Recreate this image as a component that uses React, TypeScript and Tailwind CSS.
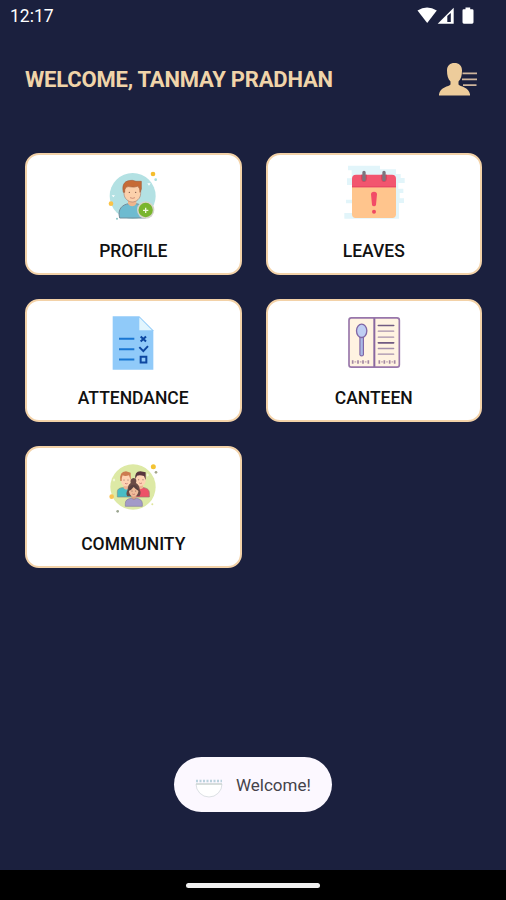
import React from 'react';

function ProfileIcon() {
  return (
    <svg viewBox="-15 0 228 210" className="w-[76px] h-[70px]">
      <circle cx="98" cy="108" r="69" fill="#b3e1e3" />
      <path d="M59 174C52 148 66 134 86 131h22c20 3 34 17 29 43z" fill="#6ebbd0" stroke="#738d9b" strokeWidth="3" />
      <path d="M84 114h25v17c-6 10-19 10-25 0z" fill="#efb58c" />
      <path d="M72 86c0-18 8-21 25-21s25 3 25 21v14c0 16-13 26-25 26s-25-10-25-26z" fill="#fbd0ab" stroke="#a98274" strokeWidth="2" />
      <path d="M70 97c-5-25 4-36 27-36 4 0 7 3 11 3h16v23l-4 10c0-11-3-15-7-18-14 6-27-2-33 2-6 4-6 9-6 16z" fill="#c66b36" stroke="#a16040" strokeWidth="2" />
      <circle cx="88" cy="97" r="2" fill="#765145" />
      <circle cx="107" cy="97" r="2" fill="#765145" />
      <path d="M90 113q8 4 15 0" fill="none" stroke="#b96f5f" strokeWidth="2" />
      <circle cx="137" cy="150" r="26" fill="#d5d4cb" />
      <circle cx="137" cy="150" r="21.5" fill="#79b52d" />
      <path d="M129 151h16M137 143v16" stroke="#eff8dc" strokeWidth="4" />
      <circle cx="159" cy="42" r="7" fill="#f5bd2d" />
      <circle cx="33" cy="131" r="7" fill="#fbc346" />
      <circle cx="167" cy="59" r="4" fill="#a7dddd" />
      <circle cx="51" cy="176" r="3" fill="#8bc5c6" />
      <path d="M35 106l5 6 5-6M142 70l5 7 5-7" fill="#fff" />
    </svg>
  );
}

function LeavesIcon() {
  return (
    <svg viewBox="0 0 228 210" className="w-[76px] h-[70px]">
      <path
        d="M36 17h96v11h48v14h14v12h12v15h-19v17h15v13h-11v16h13v14h-15v47H25v-17h23v-29H30v-11h18V75H33V55h14V31H36z"
        fill="#e2f5fa"
      />
      <path d="M48 75h132v88q0 11-11 11H59q-11 0-11-11z" fill="#ffc58d" />
      <path d="M60 44h108q12 0 12 12v26H48V56q0-12 12-12z" fill="#f2556f" />
      <path d="M48 79h132v3H48z" fill="#e64465" />
      <path d="M75 44h18v11q-1 11-9 11t-9-11zM135 44h18v11q-1 11-9 11t-9-11z" fill="#da455d" />
      <path d="M84 37v22M144 37v22" stroke="#7c747e" strokeWidth="10" strokeLinecap="round" />
      <path d="M105 103q0-8 9-8t9 8l-3 31q-1 5-6 5t-6-5z" fill="#f24c67" />
      <circle cx="114" cy="155" r="6" fill="#ef4963" />
    </svg>
  );
}

function AttendanceIcon() {
  return (
    <svg viewBox="-15 -4.5 228 210" className="w-[76px] h-[70px]">
      <path d="M38 23h80l42 42v119H38z" fill="#90caf9" />
      <path d="M118 27v38h38z" fill="#e1f5fe" />
      <path d="M57 91h46M57 122h46M57 153h46" stroke="#1976d2" strokeWidth="6" />
      <path d="M122 84l16 15M138 84l-16 15" stroke="#0d47a1" strokeWidth="6" />
      <path d="M118 116l12 12 14-15" fill="none" stroke="#0d47a1" strokeWidth="6" />
      <path d="M122 145h17v17h-17z" fill="none" stroke="#0d47a1" strokeWidth="6" />
    </svg>
  );
}

function CanteenIcon() {
  return (
    <svg viewBox="-12 -4.5 228 210" className="w-[76px] h-[70px]">
      <rect x="27" y="28" width="151" height="148" rx="7" fill="#fff3e1" stroke="#9876aa" strokeWidth="5" />
      <path d="M103 29v146" stroke="#8968a0" strokeWidth="6" />
      <path d="M115 51h46M115 103h46" stroke="#715b82" strokeWidth="5" strokeLinecap="round" />
      <path d="M115 68h46M115 86h46M115 120h46M115 137h46" stroke="#a590ac" strokeWidth="4" strokeLinecap="round" />
      <path d="M65 84v53" stroke="#8067a6" strokeWidth="14" strokeLinecap="round" />
      <path d="M65 84v53" stroke="#a9b9e6" strokeWidth="7" strokeLinecap="round" />
      <ellipse cx="65" cy="67" rx="15.5" ry="20" fill="#bfcef3" stroke="#8067a6" strokeWidth="4" />
      <path
        d="M38 155v11M54 155v11M69 155v11M85 155v11M118 155v11M133 155v11M149 155v11M164 155v11"
        stroke="#a287a2"
        strokeWidth="5"
      />
      <path d="M46 158v4M62 158v4M77 158v4M126 158v4M141 158v4M157 158v4" stroke="#c0a4b4" strokeWidth="5" />
    </svg>
  );
}

function CommunityIcon() {
  return (
    <svg viewBox="-15 -9 228 210" className="w-[76px] h-[70px]">
      <circle cx="99" cy="93" r="68" fill="#dde9a5" />
      <path d="M52 123V107q0-10 14-12h21l9 28z" fill="#48bdc5" stroke="#828f88" strokeWidth="2" />
      <path d="M104 123l8-28h20q16 3 16 15v13z" fill="#ed5268" stroke="#9a746c" strokeWidth="2" />
      <path d="M71 84h15v13q-7 8-15 0zM115 82h14v14q-7 7-14 0z" fill="#eeb495" />
      <path d="M63 65q0-14 14-14t16 14v9q-1 17-15 17T63 74z" fill="#fed2b3" />
      <path d="M107 63q0-14 15-14t15 14v10q-1 17-15 17t-15-17z" fill="#fed2b3" />
      <path d="M61 75q-4-28 17-29l14 4v22l-5-14q-12 4-19 0-3 5-3 17z" fill="#cc7b50" />
      <path d="M106 70q-3-24 15-24l16 3v23l-5-12q-12-4-21-1z" fill="#58353d" />
      <path d="M82 121q-6-8 1-20 0-14 9-20-3-14 9-15 11 1 7 15 11 7 11 20 6 9-1 20z" fill="#6a4b46" />
      <path d="M94 116h15v15q-8 8-15 0z" fill="#dba07f" />
      <ellipse cx="101" cy="106" rx="14" ry="16" fill="#efbc9a" />
      <path d="M85 105q1-18 16-19 14 2 15 19-8-4-15-12-6 9-16 12z" fill="#59413f" />
      <path d="M76 151v-9q0-13 18-15 8 7 15 0 17 2 18 15v9z" fill="#a39ac8" stroke="#877f9f" strokeWidth="2" />
      <g fill="#765247">
        <circle cx="72" cy="72" r="1.5" />
        <circle cx="84" cy="72" r="1.5" />
        <circle cx="116" cy="71" r="1.5" />
        <circle cx="129" cy="71" r="1.5" />
        <circle cx="96" cy="105" r="1.5" />
        <circle cx="107" cy="105" r="1.5" />
      </g>
      <path d="M75 82q4 3 8 0M118 81q4 3 8 0M97 114q4 3 8 0" fill="none" stroke="#b7605c" strokeWidth="2" />
      <circle cx="160" cy="32" r="7.5" fill="#f3c333" />
      <circle cx="35" cy="122" r="7" fill="#fac353" />
      <circle cx="168" cy="49" r="4" fill="#a3a688" />
      <circle cx="53" cy="166" r="4" fill="#9ba590" />
      <circle cx="157" cy="145" r="3" fill="#dfe49c" />
      <path d="M38 72l4-5 4 5-4 5zM139 57l4-5 4 5-4 5z" fill="#f5f8db" />
    </svg>
  );
}

const menuItems = [
  { label: 'PROFILE', icon: ProfileIcon, width: 'w-[68px]' },
  { label: 'LEAVES', icon: LeavesIcon, width: 'w-[62px]' },
  { label: 'ATTENDANCE', icon: AttendanceIcon, width: 'w-[110px]' },
  { label: 'CANTEEN', icon: CanteenIcon, width: 'w-[78px]' },
  { label: 'COMMUNITY', icon: CommunityIcon, width: 'w-[104px]' }
];

function StatusBar() {
  return (
    <div className="flex h-8 shrink-0 items-center justify-between pl-[10px] pr-[31px] text-white">
      <span className="text-[17.5px] leading-8">12:17</span>
      <svg viewBox="0 0 60 20" className="h-5 w-[60px]">
        <path d="M2.5 4.5Q12 -1.5 21.8 4.5L12.2 17z" fill="#fff" />
        <path d="M38.7 1.7V17.7H22.7z" fill="#fff" />
        <path d="M35.8 7v9h-3.5v-6z" fill="#1b203e" />
        <path d="M48.5 3.2h2V1.5h4.7v1.7h2q1.3 0 1.3 1.3v11.8q0 1.4-1.4 1.4h-8.2q-1.4 0-1.4-1.4V4.5q0-1.3 1-1.3z" fill="#fff" />
      </svg>
    </div>
  );
}

function AccountIcon() {
  return (
    <svg viewBox="0 0 40 34" className="h-[34px] w-10">
      <path
        d="M9 8.5C9 3.5 12 1 16.5 1S24 3.5 24 8.5c0 5-1 8.5-3.5 11v3c1.5 2 10.5 2.7 11.5 9.8v1.2H1v-1.2c1-7.1 10-7.8 11.5-9.8v-3C10 17 9 13.5 9 8.5z"
        fill="#edcc9b"
      />
      <path d="M24.5 11.3H39M24 17.3h15M25 23.2h13.5" stroke="#cfb59c" strokeWidth="1.8" />
    </svg>
  );
}

export default function App() {
  return (
    <div className="flex h-[900px] w-[506px] flex-col overflow-hidden bg-[#1b203e] font-['Roboto',sans-serif]">
      <StatusBar />

      <header className="flex h-[120.5px] shrink-0 items-start justify-between pl-[25px] pr-[28px] pt-[30px]">
        <h1 className="pt-[3px] text-[22px] font-bold leading-[30px] tracking-[-0.2px] text-[#f0d4a9]">
          WELCOME, TANMAY PRADHAN
        </h1>
        <AccountIcon />
      </header>

      <main className="grid grid-cols-2 gap-6 pl-[25px] pr-6">
        {menuItems.map(({ label, icon: Icon }) => (
          <button
            key={label}
            className="flex h-[122.5px] flex-col items-center rounded-[14px] border-2 border-[#f3d2a8] bg-white pt-[5.5px]"
          >
            <Icon />
            <span className="mt-[9px] text-[17.5px] font-medium leading-6 text-[#111]">{label}</span>
          </button>
        ))}
      </main>

      <div className="mt-auto mb-[58px] flex h-[55px] w-[158px] shrink-0 items-center self-center rounded-full bg-[#fcf8ff] pl-[21px]">
        {/* Faint bowl logo */}
        <svg viewBox="0 0 28 28" className="h-7 w-7">
          <path d="M1 13a13 13 0 0 0 26 0z" fill="#fff" stroke="#dce0e4" strokeWidth="1" />
          <path d="M1 10h26" stroke="#9fc3d0" strokeWidth="2.5" strokeDasharray="2 1.5" opacity=".7" />
          <path d="M1 13h26" stroke="#b7c5bb" strokeWidth=".8" />
        </svg>
        <span className="ml-[13px] text-[17px] leading-6 text-[#45434a]">Welcome!</span>
      </div>

      <footer className="flex h-[30px] shrink-0 items-center justify-center bg-black">
        <div className="h-[5px] w-[134px] rounded-full bg-[#f0f0f0]" />
      </footer>
    </div>
  );
}
